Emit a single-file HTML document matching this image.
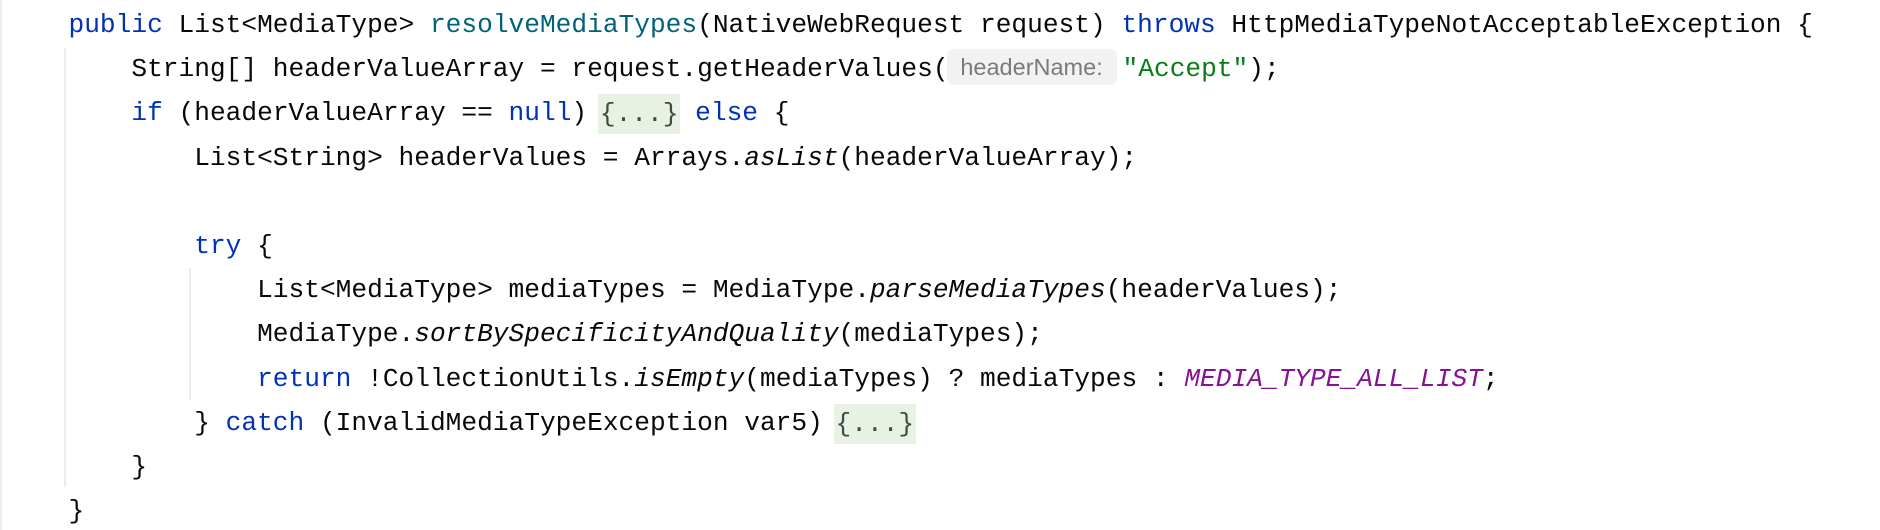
<!DOCTYPE html>
<html><head><meta charset="utf-8"><style>
html,body{margin:0;padding:0;background:#fff;width:1880px;height:530px;overflow:hidden;position:relative}
.code{position:absolute;left:68.5px;top:3px;font-family:"Liberation Mono",monospace;font-size:26.2px;line-height:44.2px;color:#080808}
.l{height:44.2px;white-space:pre}
.k{color:#0033B3}.m{color:#00627A}.s{color:#067D17}.c{color:#871094;font-style:italic}.i{font-style:italic}
.f{background:#e8f2e4;color:#3d4d3d;display:inline-block;line-height:40px;padding:0 2px;margin-left:-5px;margin-right:-1px;position:relative;top:1px}
.h{display:inline-block;width:170px;height:36px;line-height:36px;background:#f2f2f2;border-radius:7px;color:#7a7a7a;font-family:"Liberation Sans",sans-serif;font-size:23.5px;text-align:center;margin-right:6px;margin-left:-2px;vertical-align:middle;position:relative;top:-2px}
.g{position:absolute;width:2px;background:#ebebf0}
</style></head><body>
<div class="g" style="left:0;top:0;height:530px"></div>
<div class="g" style="left:64px;top:48px;height:439px"></div>
<div class="g" style="left:189px;top:268px;height:132px"></div>
<div class="code">
<div class="l"><span class="k">public</span> List&lt;MediaType&gt; <span class="m">resolveMediaTypes</span>(NativeWebRequest request) <span class="k">throws</span> HttpMediaTypeNotAcceptableException {</div>
<div class="l">    String[] headerValueArray = request.getHeaderValues(<span class="h">headerName:</span><span class="s">"Accept"</span>);</div>
<div class="l">    <span class="k">if</span> (headerValueArray == <span class="k">null</span>) <span class="f">{...}</span> <span class="k">else</span> {</div>
<div class="l">        List&lt;String&gt; headerValues = Arrays.<span class="i">asList</span>(headerValueArray);</div>
<div class="l"> </div>
<div class="l">        <span class="k">try</span> {</div>
<div class="l">            List&lt;MediaType&gt; mediaTypes = MediaType.<span class="i">parseMediaTypes</span>(headerValues);</div>
<div class="l">            MediaType.<span class="i">sortBySpecificityAndQuality</span>(mediaTypes);</div>
<div class="l">            <span class="k">return</span> !CollectionUtils.<span class="i">isEmpty</span>(mediaTypes) ? mediaTypes : <span class="c">MEDIA_TYPE_ALL_LIST</span>;</div>
<div class="l">        } <span class="k">catch</span> (InvalidMediaTypeException var5) <span class="f">{...}</span></div>
<div class="l">    }</div>
<div class="l">}</div>
</div>
</body></html>
